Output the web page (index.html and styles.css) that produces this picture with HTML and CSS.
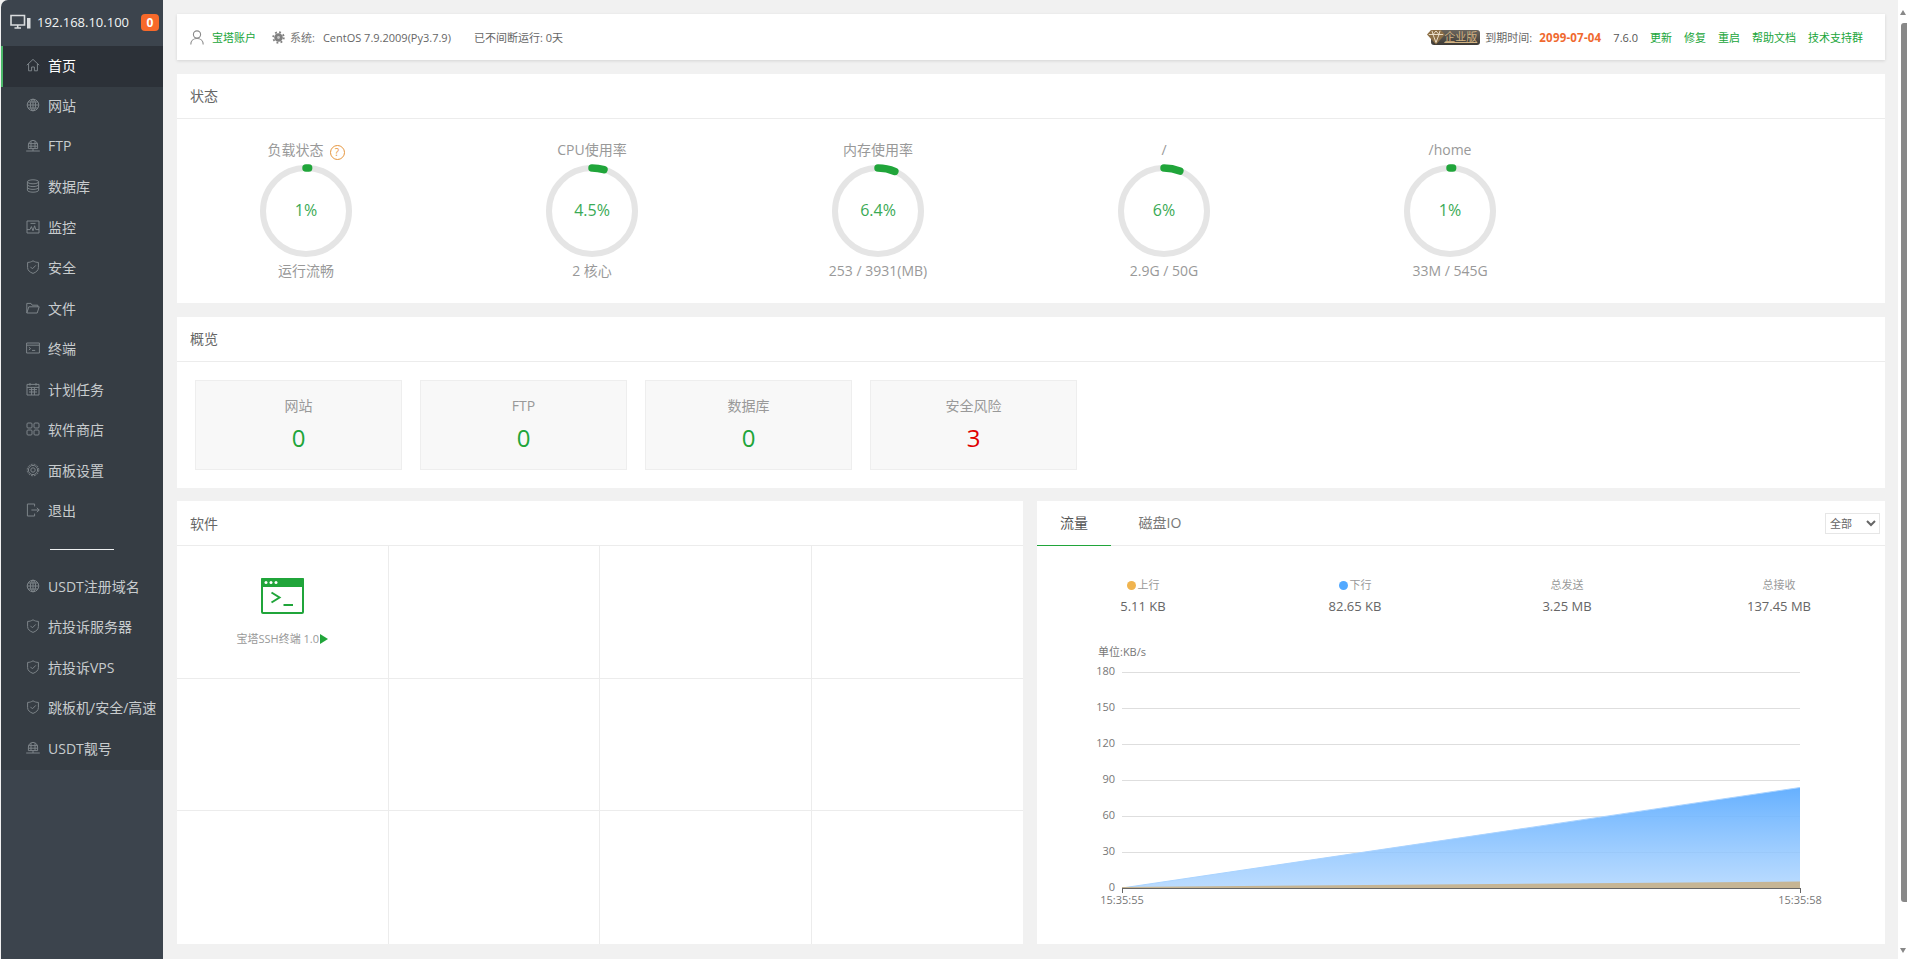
FILE: index.html
```html
<!DOCTYPE html>
<html lang="zh-CN">

<head>
    <meta charset="UTF-8">
    <meta name="viewport" content="width=device-width, initial-scale=1.0">
    <title>宝塔面板</title>
    <link rel="stylesheet" href="styles.css">
</head>

<body>
    <!-- icon set -->
    <svg class="icon-defs" aria-hidden="true">
        <symbol id="i-home" viewBox="0 0 14 14"><path d="M.8 7.2 7 1.4l6.2 5.8M2.6 6v6.8h3V9h2.8v3.8h3V6"/></symbol>
        <symbol id="i-globe" viewBox="0 0 14 14"><circle cx="7" cy="7" r="5.8"/><ellipse cx="7" cy="7" rx="2.6" ry="5.8"/><path d="M1.2 7h11.6M2 4h10M2 10h10M7 1.2v11.6"/></symbol>
        <symbol id="i-ftp" viewBox="0 0 14 14"><path d="M2.4 9.6V6a4.6 4.6 0 0 1 9.2 0v3.6zM5 2v7.6M9 2v7.6M2.4 4.6h9.2M2.4 7.2h9.2M.2 12h13.6M7 9.6V12"/></symbol>
        <symbol id="i-db" viewBox="0 0 14 14"><ellipse cx="7" cy="2.8" rx="5.6" ry="2"/><path d="M1.4 2.8v8.4c0 1.1 2.5 2 5.6 2s5.6-.9 5.6-2V2.8M1.4 5.6c0 1.1 2.5 2 5.6 2s5.6-.9 5.6-2M1.4 8.4c0 1.1 2.5 2 5.6 2s5.6-.9 5.6-2"/></symbol>
        <symbol id="i-monitor" viewBox="0 0 14 14"><path d="M1 1h12v12H1zM1 9.6h3l1.4-3 1.6 4.2 1.6-5 1.2 3.8H13M4.5 3.4h5"/></symbol>
        <symbol id="i-shield" viewBox="0 0 14 14"><path d="M7 .8c1.6 1.1 3.4 1.6 5.4 1.6v5.2c0 2.8-2.2 4.6-5.4 5.8-3.2-1.2-5.4-3-5.4-5.8V2.400C3.600 2.400 5.400 1.900 7 .8zM4.400 6.800l2 2 3.400-3.400"/></symbol>
        <symbol id="i-folder" viewBox="0 0 14 14"><path d="M.8 12V2.400h4.200l1.200 1.800h5.600v1.600M.8 12l2-6.200h10.400L11.200 12z"/></symbol>
        <symbol id="i-term" viewBox="0 0 14 14"><path d="M.6 2h12.800v10H.6zM.6 4.200h12.800M2.800 6.200l1.800 1.400-1.800 1.400M6 9.400h3.200"/></symbol>
        <symbol id="i-cal" viewBox="0 0 14 14"><path d="M1 2.400h12v10.600H1zM1 5.400h12M4 1v2.600M10 1v2.600M3 7.600h8M3 10h8M5.600 5.400V13M8.400 5.400V13"/></symbol>
        <symbol id="i-apps" viewBox="0 0 14 14"><rect x="1" y="1" width="5" height="5" rx="1"/><rect x="8" y="1" width="5" height="5" rx="1"/><rect x="1" y="8" width="5" height="5" rx="1"/><rect x="8" y="8" width="5" height="5" rx="1"/></symbol>
        <symbol id="i-gear" viewBox="0 0 14 14"><circle cx="7" cy="7" r="2.200"/><circle cx="7" cy="7" r="4.600"/><circle cx="7" cy="7" r="5.800" stroke-dasharray="1.800 1.240"/></symbol>
        <symbol id="i-exit" viewBox="0 0 14 14"><path d="M8.600 3.400V1H1.400v12h7.200v-2.400M5.400 7h7.800M10.800 4.800 13.200 7l-2.400 2.200"/></symbol>
    </svg>

    <div class="layout">
        <aside class="sidebar">
            <div class="side-head">
                <svg class="head-icon" viewBox="0 0 21 16"><path d="M1 1.500h13.500v9.500H1zM4.500 14h6.500M7.700 11v3"/><rect class="tower" x="17" y="4" width="3.500" height="10.500"/></svg>
                <span class="head-ip">192.168.10.100</span>
                <span class="head-badge">0</span>
            </div>
            <nav class="menu">
                <a class="menu-item active"><svg class="m-icon"><use href="#i-home"/></svg>首页</a>
                <a class="menu-item"><svg class="m-icon"><use href="#i-globe"/></svg>网站</a>
                <a class="menu-item"><svg class="m-icon"><use href="#i-ftp"/></svg>FTP</a>
                <a class="menu-item"><svg class="m-icon"><use href="#i-db"/></svg>数据库</a>
                <a class="menu-item"><svg class="m-icon"><use href="#i-monitor"/></svg>监控</a>
                <a class="menu-item"><svg class="m-icon"><use href="#i-shield"/></svg>安全</a>
                <a class="menu-item"><svg class="m-icon"><use href="#i-folder"/></svg>文件</a>
                <a class="menu-item"><svg class="m-icon"><use href="#i-term"/></svg>终端</a>
                <a class="menu-item"><svg class="m-icon"><use href="#i-cal"/></svg>计划任务</a>
                <a class="menu-item"><svg class="m-icon"><use href="#i-apps"/></svg>软件商店</a>
                <a class="menu-item"><svg class="m-icon"><use href="#i-gear"/></svg>面板设置</a>
                <a class="menu-item"><svg class="m-icon"><use href="#i-exit"/></svg>退出</a>
                <div class="menu-sep"><span></span></div>
                <a class="menu-item"><svg class="m-icon"><use href="#i-globe"/></svg>USDT注册域名</a>
                <a class="menu-item"><svg class="m-icon"><use href="#i-shield"/></svg>抗投诉服务器</a>
                <a class="menu-item"><svg class="m-icon"><use href="#i-shield"/></svg>抗投诉VPS</a>
                <a class="menu-item"><svg class="m-icon"><use href="#i-shield"/></svg>跳板机/安全/高速</a>
                <a class="menu-item"><svg class="m-icon"><use href="#i-ftp"/></svg>USDT靓号</a>
            </nav>
        </aside>

        <main class="main">
            <!-- top bar -->
            <div class="topbar">
                <div class="top-left">
                    <svg class="user-icon" viewBox="0 0 14 15"><circle cx="7" cy="4.500" r="3.600"/><path d="M.8 14.500c0-3.600 2.600-6 6.200-6s6.200 2.400 6.200 6"/></svg>
                    <a class="link acct">宝塔账户</a>
                    <svg class="sys-icon" viewBox="0 0 14 14"><circle cx="7" cy="7" r="4.600"/><circle class="teeth" cx="7" cy="7" r="5.700" stroke-dasharray="2 2.480"/><circle class="hole" cx="7" cy="7" r="1.500"/></svg>
                    <span class="sys-label">系统:</span>
                    <span class="sys-name">CentOS 7.9.2009(Py3.7.9)</span>
                    <span class="uptime">已不间断运行: 0天</span>
                </div>
                <div class="top-right">
                    <span class="ent">
                        <svg class="ent-gem" viewBox="0 0 18 16"><path d="M4 1h10l4 4.500L9 15.500 0 5.500z"/><path class="facet" d="M1.800 5.500h14.400M5 1.800 6 5.500 9 13.500 12 5.500 13 1.800M6 5.500 9 2l3 3.500"/></svg>
                        <span class="ent-text">企业版</span>
                    </span>
                    <span class="expire">到期时间:</span>
                    <span class="date">2099-07-04</span>
                    <span class="ver">7.6.0</span>
                    <a class="link">更新</a>
                    <a class="link">修复</a>
                    <a class="link">重启</a>
                    <a class="link">帮助文档</a>
                    <a class="link">技术支持群</a>
                </div>
            </div>

            <!-- status -->
            <section class="card">
                <div class="card-title">状态</div>
                <div class="gauges">
                    <div class="gauge">
                        <div class="g-label">负载状态<span class="help">?</span></div>
                        <svg class="ring" viewBox="0 0 92 92"><circle class="track" cx="46" cy="46" r="43"/><circle class="arc" cx="46" cy="46" r="43" stroke-dasharray="2.700 270"/><text x="46" y="51">1%</text></svg>
                        <div class="g-foot">运行流畅</div>
                    </div>
                    <div class="gauge">
                        <div class="g-label">CPU使用率</div>
                        <svg class="ring" viewBox="0 0 92 92"><circle class="track" cx="46" cy="46" r="43"/><circle class="arc" cx="46" cy="46" r="43" stroke-dasharray="12.200 270"/><text x="46" y="51">4.5%</text></svg>
                        <div class="g-foot">2 核心</div>
                    </div>
                    <div class="gauge">
                        <div class="g-label">内存使用率</div>
                        <svg class="ring" viewBox="0 0 92 92"><circle class="track" cx="46" cy="46" r="43"/><circle class="arc" cx="46" cy="46" r="43" stroke-dasharray="17.300 270"/><text x="46" y="51">6.4%</text></svg>
                        <div class="g-foot">253 / 3931(MB)</div>
                    </div>
                    <div class="gauge">
                        <div class="g-label">/</div>
                        <svg class="ring" viewBox="0 0 92 92"><circle class="track" cx="46" cy="46" r="43"/><circle class="arc" cx="46" cy="46" r="43" stroke-dasharray="16.200 270"/><text x="46" y="51">6%</text></svg>
                        <div class="g-foot">2.9G / 50G</div>
                    </div>
                    <div class="gauge">
                        <div class="g-label">/home</div>
                        <svg class="ring" viewBox="0 0 92 92"><circle class="track" cx="46" cy="46" r="43"/><circle class="arc" cx="46" cy="46" r="43" stroke-dasharray="2.700 270"/><text x="46" y="51">1%</text></svg>
                        <div class="g-foot">33M / 545G</div>
                    </div>
                </div>
            </section>

            <!-- overview -->
            <section class="card">
                <div class="card-title">概览</div>
                <div class="overview">
                    <div class="ov-box"><div class="ov-label">网站</div><div class="ov-num">0</div></div>
                    <div class="ov-box"><div class="ov-label">FTP</div><div class="ov-num">0</div></div>
                    <div class="ov-box"><div class="ov-label">数据库</div><div class="ov-num">0</div></div>
                    <div class="ov-box"><div class="ov-label">安全风险</div><div class="ov-num danger">3</div></div>
                </div>
            </section>

            <div class="bottom">
                <!-- software -->
                <section class="card soft-card">
                    <div class="card-title">软件</div>
                    <div class="soft-grid">
                        <div class="soft-cell">
                            <svg class="soft-icon" viewBox="0 0 43 36"><rect x="1" y="1" width="41" height="34" rx="1"/><path class="bar" d="M0 1a1 1 0 0 1 1-1h41a1 1 0 0 1 1 1v8H0z"/><circle class="dot" cx="5" cy="4.500" r="1.500"/><circle class="dot" cx="10" cy="4.500" r="1.500"/><circle class="dot" cx="15" cy="4.500" r="1.500"/><path d="M10.500 14.500l8 5-8 5M22.500 27h9.500"/></svg>
                            <div class="soft-name">宝塔SSH终端 1.0<i class="play"></i></div>
                        </div>
                        <div class="soft-cell"></div>
                        <div class="soft-cell"></div>
                        <div class="soft-cell"></div>
                        <div class="soft-cell"></div>
                        <div class="soft-cell"></div>
                        <div class="soft-cell"></div>
                        <div class="soft-cell"></div>
                        <div class="soft-cell"></div>
                        <div class="soft-cell"></div>
                        <div class="soft-cell"></div>
                        <div class="soft-cell"></div>
                    </div>
                </section>

                <!-- traffic -->
                <section class="card traffic-card">
                    <div class="tabs">
                        <span class="tab on">流量</span>
                        <span class="tab">磁盘IO</span>
                        <select class="net-select"><option>全部</option></select>
                    </div>
                    <div class="stats">
                        <div class="stat"><div class="s-label"><i class="s-dot up"></i>上行</div><div class="s-val">5.11 KB</div></div>
                        <div class="stat"><div class="s-label"><i class="s-dot down"></i>下行</div><div class="s-val">82.65 KB</div></div>
                        <div class="stat"><div class="s-label">总发送</div><div class="s-val">3.25 MB</div></div>
                        <div class="stat"><div class="s-label">总接收</div><div class="s-val">137.45 MB</div></div>
                    </div>
                    <svg class="chart" viewBox="0 0 848 300">
                        <defs>
                            <linearGradient id="blue-fill" x1="0" y1="0" x2="0" y2="1">
                                <stop offset="0" stop-color="#5fadff" stop-opacity=".96"/>
                                <stop offset="1" stop-color="#a8d2ff" stop-opacity=".78"/>
                            </linearGradient>
                        </defs>
                        <text class="unit" x="61" y="27">单位:KB/s</text>
                        <path class="grid-line" d="M85 43.500H763M85 79.500H763M85 115.500H763M85 151.500H763M85 187.500H763M85 223.500H763"/>
                        <text class="tick" x="78" y="46">180</text>
                        <text class="tick" x="78" y="82">150</text>
                        <text class="tick" x="78" y="118">120</text>
                        <text class="tick" x="78" y="154">90</text>
                        <text class="tick" x="78" y="190">60</text>
                        <text class="tick" x="78" y="226">30</text>
                        <text class="tick" x="78" y="262">0</text>
                        <path class="area-blue" d="M85 259 763 158.500V259z"/>
                        <path class="area-line" d="M85 259 763 158.500"/>
                        <path class="area-orange" d="M85 258 763 252.500V259H85z"/>
                        <path class="axis" d="M85 259.500H763M85.500 259v5M763.500 259v5"/>
                        <text class="time" x="85" y="275">15:35:55</text>
                        <text class="time" x="763" y="275">15:35:58</text>
                    </svg>
                </section>
            </div>
        </main>

        <div class="scrollbar">
            <i class="sb-up"></i>
            <i class="sb-thumb"></i>
            <i class="sb-down"></i>
        </div>
    </div>
</body>

</html>
```

FILE: styles.css
```css
* {
  box-sizing: border-box;
}

html, body {
  height: 100%;
}

body {
  margin: 0;
  background-color: #f1f1f1;
  color: #666;
  font-family: "Open Sans", "Noto Sans CJK SC", sans-serif;
  font-size: 12px;
  overflow: hidden;
}

.icon-defs {
  display: none;
}

.layout {
  display: flex;
  height: 100%;
}

/* sidebar */
.sidebar {
  width: 162px;
  margin-left: 1px;
  flex-shrink: 0;
  background-color: #3c444d;
  border-top-left-radius: 7px;
  overflow: hidden;
}

.side-head {
  height: 46px;
  display: flex;
  align-items: center;
  padding-left: 9px;
  padding-bottom: 2px;
}

.head-icon {
  width: 21px;
  height: 16px;
  fill: none;
  stroke: #d9dcde;
  stroke-width: 1.6;
}

.head-icon .tower {
  fill: #d9dcde;
  stroke: none;
}

.head-ip {
  margin-left: 6px;
  color: #f2f4f5;
  font-size: 13px;
}

.head-badge {
  margin-left: 12px;
  width: 18px;
  height: 17px;
  border-radius: 4px;
  background-color: #f7692a;
  color: #fff;
  font-weight: 700;
  font-size: 12px;
  line-height: 17px;
  text-align: center;
}

.menu {
  background-color: #363d44;
}

.menu-item {
  height: 40.5px;
  display: flex;
  align-items: center;
  padding-left: 25px;
  padding-bottom: 3px;
  color: #c8ccce;
  font-size: 14px;
  white-space: nowrap;
}

.menu-item.active {
  background-color: #2c3138;
  border-left: 2px solid #4cb86a;
  padding-left: 23px;
  color: #fff;
}

.m-icon {
  width: 14px;
  height: 14px;
  margin-right: 8px;
  fill: none;
  stroke: #7d8489;
  stroke-width: 1;
  flex-shrink: 0;
}

.menu-sep {
  height: 35px;
  display: flex;
  align-items: center;
  padding-left: 49px;
}

.menu-sep span {
  width: 64px;
  height: 1px;
  background-color: #eef0f1;
}

/* main column */
.main {
  flex: 1;
  min-width: 0;
  padding: 14px 13px 15px 14px;
  display: flex;
  flex-direction: column;
}

.card {
  background-color: #fff;
  margin-top: 14px;
}

.card-title {
  height: 45px;
  line-height: 44px;
  padding-left: 13px;
  border-bottom: 1px solid #ececec;
  font-size: 14px;
  color: #666;
}

/* top bar */
.topbar {
  height: 46px;
  background-color: #fff;
  box-shadow: 0 1px 3px rgba(0, 0, 0, .12);
  display: flex;
  justify-content: space-between;
  align-items: center;
  padding: 0 22px 0 13px;
  font-size: 11px;
}

.top-left, .top-right {
  display: flex;
  align-items: center;
}

.link {
  color: #20a53a;
}

.user-icon {
  width: 14px;
  height: 15px;
  fill: none;
  stroke: #8a8a8a;
  stroke-width: 1.1;
}

.acct {
  margin-left: 8px;
}

.sys-icon {
  width: 13px;
  height: 13px;
  margin-left: 16px;
  fill: #808080;
}

.sys-icon .teeth {
  fill: none;
  stroke: #808080;
  stroke-width: 2;
}

.sys-icon .hole {
  fill: #c8c8c8;
}

.sys-label {
  margin-left: 5px;
  color: #777;
}

.sys-name {
  margin-left: 8px;
  color: #666;
}

.uptime {
  margin-left: 23px;
  color: #666;
}

.ent {
  position: relative;
  width: 49px;
  height: 15px;
  margin-right: 5px;
  background: linear-gradient(#6b665e, #3d3a36);
  border-radius: 3px;
  display: flex;
  align-items: center;
  justify-content: flex-end;
  padding-right: 3px;
}

.ent-gem {
  position: absolute;
  left: -4px;
  top: -1px;
  width: 18px;
  height: 16px;
  fill: #8c6f46;
}

.ent-gem .facet {
  fill: none;
  stroke: #f3e7d2;
  stroke-width: .9;
}

.ent-text {
  color: #d3b483;
  font-size: 11px;
  line-height: 14px;
  text-decoration: underline;
}

.expire {
  color: #666;
  width: 54px;
}

.date {
  color: #f0692f;
  font-weight: 700;
  font-size: 11.500px;
  letter-spacing: .2px;
}

.ver {
  margin-left: 12px;
  color: #555;
}

.top-right .link {
  margin-left: 12px;
}

/* gauges */
.gauges {
  display: flex;
  gap: 28px;
  padding: 21px 0 22px;
}

.gauge {
  width: 258px;
  text-align: center;
}

.g-label {
  height: 20px;
  line-height: 20px;
  font-size: 14px;
  color: #999;
}

.help {
  display: inline-block;
  margin-left: 6px;
  width: 15px;
  height: 15px;
  border: 1px solid #e6953d;
  border-radius: 50%;
  color: #e6953d;
  font-size: 10px;
  line-height: 13px;
  vertical-align: -1px;
}

.ring {
  display: block;
  width: 92px;
  height: 92px;
  margin: 5px auto 4px;
  overflow: visible;
}

.ring .track {
  fill: none;
  stroke: #e5e5e5;
  stroke-width: 6;
}

.ring .arc {
  fill: none;
  stroke: #20a53a;
  stroke-width: 7.500;
  stroke-linecap: round;
  transform: rotate(-90deg);
  transform-origin: 46px 46px;
}

.ring text {
  fill: #3aaa55;
  font-size: 16px;
  text-anchor: middle;
}

.g-foot {
  height: 20px;
  line-height: 20px;
  font-size: 14px;
  color: #999;
}

/* overview */
.overview {
  display: flex;
  gap: 18px;
  padding: 18px;
}

.ov-box {
  width: 207px;
  height: 90px;
  background-color: #f8f8f8;
  border: 1px solid #eee;
  text-align: center;
  padding-top: 15px;
}

.ov-label {
  font-size: 14px;
  line-height: 20px;
  color: #999;
}

.ov-num {
  margin-top: 6px;
  font-size: 24px;
  line-height: 32px;
  color: #20a53a;
}

.ov-num.danger {
  color: #e00000;
}

/* bottom row */
.bottom {
  flex: 1;
  min-height: 0;
  display: flex;
  gap: 14px;
  margin-top: -1px;
}

.soft-card {
  width: 846px;
  display: flex;
  flex-direction: column;
}

.soft-card .card-title {
  line-height: 46px;
}

.soft-grid {
  flex: 1;
  display: grid;
  grid-template-columns: repeat(4, 1fr);
  grid-template-rows: repeat(3, 1fr);
}

.soft-cell {
  border-right: 1px solid #ececec;
  border-bottom: 1px solid #ececec;
  padding-top: 32px;
  text-align: center;
}

.soft-cell:nth-child(4n) {
  border-right: none;
}

.soft-cell:nth-child(n+9) {
  border-bottom: none;
}

.soft-icon {
  display: block;
  width: 43px;
  height: 36px;
  margin: 0 auto 15px;
  fill: none;
  stroke: #20a53a;
  stroke-width: 2;
}

.soft-icon .bar {
  fill: #20a53a;
  stroke: none;
}

.soft-icon .dot {
  fill: #fff;
  stroke: none;
}

.soft-name {
  font-size: 11px;
  color: #999;
  line-height: 20px;
}

.play {
  display: inline-block;
  margin-left: 1px;
  border-left: 8px solid #20a53a;
  border-top: 5px solid transparent;
  border-bottom: 5px solid transparent;
  vertical-align: -1px;
}

.traffic-card {
  flex: 1;
  min-width: 0;
}

.tabs {
  height: 45px;
  border-bottom: 1px solid #ececec;
  display: flex;
  align-items: stretch;
}

.tab {
  width: 74px;
  font-size: 14px;
  line-height: 44px;
  text-align: center;
  color: #777;
}

.tab + .tab {
  width: 98px;
}

.tab.on {
  color: #555;
  border-bottom: 1px solid #20a53a;
  height: 45px;
}

.net-select {
  margin: 12px 5px 0 auto;
  width: 55px;
  height: 21px;
  background-color: #fff;
  border: 1px solid #e6e6e6;
  color: #666;
  font-family: inherit;
  font-size: 11px;
}

.stats {
  display: grid;
  grid-template-columns: repeat(4, 1fr);
  padding-top: 29px;
  text-align: center;
}

.s-label {
  font-size: 11px;
  line-height: 20px;
  color: #999;
}

.s-dot {
  display: inline-block;
  width: 9px;
  height: 9px;
  margin-right: 2px;
  border-radius: 50%;
  vertical-align: -1px;
}

.s-dot.up {
  background-color: #f0b44f;
}

.s-dot.down {
  background-color: #52a9ff;
}

.s-val {
  font-size: 13px;
  line-height: 22px;
  color: #666;
}

.chart {
  display: block;
  width: 848px;
  height: 300px;
  margin-top: 12px;
}

.chart text {
  font-size: 11px;
  fill: #777;
}

.chart .tick {
  text-anchor: end;
}

.chart .time {
  text-anchor: middle;
}

.grid-line {
  fill: none;
  stroke: #dedede;
}

.area-blue {
  fill: url(#blue-fill);
}

.area-line {
  fill: none;
  stroke: #a9d3ff;
}

.area-orange {
  fill: #c6b594;
}

.axis {
  fill: none;
  stroke: #666;
}

/* scrollbar on the right edge */
.scrollbar {
  width: 9px;
  flex-shrink: 0;
  background-color: #fff;
  position: relative;
}

.sb-up {
  position: absolute;
  top: 10px;
  left: 2px;
  border-left: 3.500px solid transparent;
  border-right: 3.500px solid transparent;
  border-bottom: 5px solid #888;
}

.sb-thumb {
  position: absolute;
  top: 23px;
  left: 3px;
  width: 6px;
  height: 879px;
  background-color: #888;
  border-radius: 3px 0 0 3px;
}

.sb-down {
  position: absolute;
  bottom: 6px;
  left: 2px;
  border-left: 3.500px solid transparent;
  border-right: 3.500px solid transparent;
  border-top: 5px solid #888;
}
```
